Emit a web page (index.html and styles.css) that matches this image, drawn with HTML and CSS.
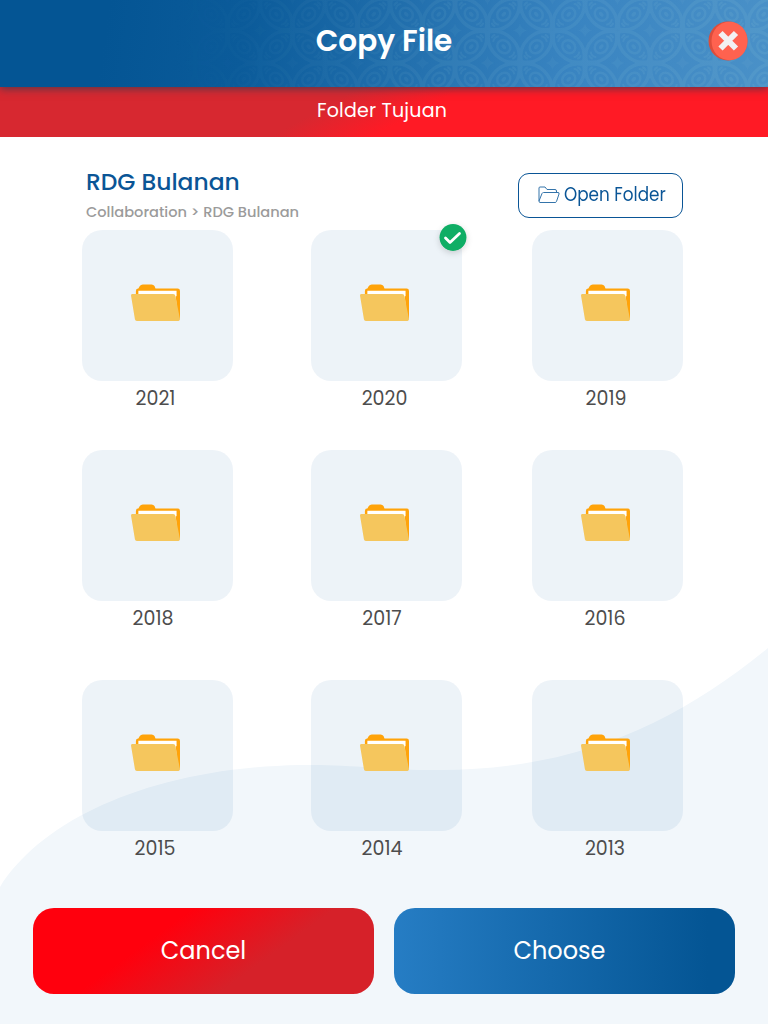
FILE: index.html
```html
<!DOCTYPE html>
<html lang="id">
<head>
<meta charset="utf-8">
<title>Copy File</title>
<link rel="stylesheet" href="styles.css">
</head>
<body>
<svg width="0" height="0" class="defs">
  <symbol id="folder" viewBox="0 0 50 38">
    <path fill="#ffa30a" d="M5 14V7q0-2.500 2.500-2.500L9 2q1-1.700 3-1.700h9q2 0 3 1.700l1 2.500h22.500q2.500 0 2.500 2.500V36l-4-9z"/>
    <path fill="#fff" d="M7.500 6.800h39v20h-39z"/>
    <path fill="#ffa30a" d="M45.500 13l1.200-1 3.300-3v28z"/>
    <path fill="#f5c65d" d="M1.500 10H43q2 0 2.300 2L50 35.700q0 1.800-1.500 1.800H6q-1.700 0-2-1.700L0 11.500Q0 10 1.500 10z"/>
  </symbol>
</svg>
<div class="screen">
  <svg class="wave" viewBox="0 0 768 384" width="768" height="384"><path d="M0 247C42 180 150 128 300 125C350 124 380 130 440 130C580 130 680 80 768 8V384H0z"/></svg>
  <header class="header">
    <svg class="batik" width="768" height="87">
      <defs>
        <g id="eye" fill="none" stroke="#8cc6d8" stroke-width="2">
          <path d="M-21 0C-12-15 12-15 21 0C12 15-12 15-21 0z" stroke-width="3.500"/>
          <path d="M-11-4q-3 4 0 8M-14.500-2.500q-1.500 2.500 0 5M11-4q3 4 0 8M14.500-2.500q1.500 2.500 0 5"/>
          <ellipse rx="7" ry="6" stroke-width="2.500"/><ellipse rx="2.800" ry="1.800" fill="#8cc6d8" stroke="none"/>
        </g>
        <pattern id="tile" width="65" height="65" patternUnits="userSpaceOnUse" x="0" y="-2">
          <use href="#eye" transform="translate(16.250 16.250) rotate(45)"/>
          <use href="#eye" transform="translate(48.750 16.250) rotate(-45)"/>
          <use href="#eye" transform="translate(16.250 48.750) rotate(-45)"/>
          <use href="#eye" transform="translate(48.750 48.750) rotate(45)"/>
          <path fill="#8cc6d8" opacity=".6" d="M32.500-7Q34-1.500 39.500 0Q34 1.500 32.500 7Q31 1.500 25.500 0Q31-1.500 32.500-7zM32.500 58Q34 63.500 39.500 65Q34 66.500 32.500 72Q31 66.500 25.500 65Q31 63.500 32.500 58zM0 25.500Q1.500 31 7 32.500Q1.500 34 0 39.500Q-1.500 34-7 32.500Q-1.500 31 0 25.500zM65 25.500Q66.500 31 72 32.500Q66.500 34 65 39.500Q63.500 34 58 32.500Q63.500 31 65 25.500z"/>
        </pattern>
        <linearGradient id="fade"><stop offset=".22" stop-color="#fff" stop-opacity="0"/><stop offset=".6" stop-color="#fff" stop-opacity=".1"/><stop offset="1" stop-color="#fff" stop-opacity=".13"/></linearGradient>
        <mask id="m"><rect width="768" height="87" fill="url(#fade)"/></mask>
      </defs>
      <rect width="768" height="87" fill="url(#tile)" mask="url(#m)"/>
    </svg>
    <h1 class="title">Copy File</h1>
    <svg class="close" viewBox="0 0 40 40" width="40" height="40"><circle cx="20" cy="20" r="19.500" fill="#dd4d3b"/><ellipse cx="21.500" cy="20" rx="18" ry="19.300" fill="#ff624f"/><path d="M12.500 12l15.500 15.500m0-15.500l-15.500 15.500" stroke="#f2f2f2" stroke-width="6"/></svg>
  </header>
  <div class="subheader"><span class="subtitle">Folder Tujuan</span></div>
  <main class="content">
    <div class="toolbar">
      <div class="where"><h2 class="heading">RDG Bulanan</h2><p class="crumbs">Collaboration &gt; RDG Bulanan</p></div>
      <button class="open"><svg class="open-icon" width="22" height="18" viewBox="0 0 22 18" fill="none" stroke="#3474aa"><path d="M1 15V2q0-1 1-1h5l2 2.500h8q1.500 0 1.500 1.500v2M1 15L4 7.500Q4.500 6.500 5.500 6.500H20q1.500 0 1 1.500l-2.500 7.500q-.4 1-1.500 1H2q-1 0-1-1.500z"/></svg><span class="open-label">Open Folder</span></button>
    </div>
    <div class="grid">
      <div class="item"><div class="tile"><svg class="icon"><use href="#folder"/></svg></div><span class="year y1">2021</span></div>
      <div class="item"><div class="tile"><svg class="icon"><use href="#folder"/></svg><svg class="check" viewBox="0 0 28 28" width="28" height="28"><circle cx="14" cy="14.500" r="13.500" fill="#0fae65"/><path d="M6.500 15l4.500 4.500L20.500 10.500" fill="none" stroke="#fff" stroke-width="2.800" stroke-linecap="round" stroke-linejoin="round"/></svg></div><span class="year y2">2020</span></div>
      <div class="item"><div class="tile"><svg class="icon"><use href="#folder"/></svg></div><span class="year y3">2019</span></div>
      <div class="item"><div class="tile"><svg class="icon"><use href="#folder"/></svg></div><span class="year y4">2018</span></div>
      <div class="item"><div class="tile"><svg class="icon"><use href="#folder"/></svg></div><span class="year y5">2017</span></div>
      <div class="item"><div class="tile"><svg class="icon"><use href="#folder"/></svg></div><span class="year y6">2016</span></div>
      <div class="item"><div class="tile"><svg class="icon"><use href="#folder"/></svg></div><span class="year y7">2015</span></div>
      <div class="item"><div class="tile"><svg class="icon"><use href="#folder"/></svg></div><span class="year y8">2014</span></div>
      <div class="item"><div class="tile"><svg class="icon"><use href="#folder"/></svg></div><span class="year y9">2013</span></div>
    </div>
  </main>
  <footer class="actions"><button class="btn cancel">Cancel</button><button class="btn choose">Choose</button></footer>
</div>
</body>
</html>
```

FILE: styles.css
```css
* { box-sizing: border-box; margin: 0; padding: 0; }
body { font-family: Poppins, Inter, "Open Sans", sans-serif; background: #fff; }
button { font-family: inherit; }
.defs { position: absolute; }
.screen { position: relative; width: 768px; height: 1024px; overflow: hidden; display: flex; flex-direction: column; }
.wave { position: absolute; left: 0; bottom: 0; fill: #f2f7fb; }
.header { position: relative; z-index: 2; height: 87px; flex: none; display: flex; align-items: center; justify-content: center; background: linear-gradient(98deg, #045594 14%, #0b5b9a 32%, #3984c1 74%, #4a91c8); box-shadow: 0 2px 8px rgba(40, 60, 80, .7); }
.batik { position: absolute; inset: 0; }
.title { position: relative; color: #fff; font-size: 29.5px; line-height: 40px; font-weight: 600; padding-bottom: 6px; white-space: nowrap; }
.close { position: absolute; right: 20px; top: 21px; }
.subheader { position: relative; height: 50px; flex: none; display: flex; justify-content: center; align-items: center; padding: 0 4px 4px 0; background: linear-gradient(151deg, #d72830 42%, #ff1a25 54%); color: #fff; font-size: 19px; font-weight: 400; letter-spacing: .2px; }
.content { position: relative; padding: 31px 85px 0 82px; flex: 1; }
.toolbar { display: flex; justify-content: space-between; height: 62px; }
.where { padding-left: 4px; }
.heading { color: #0a5596; font-size: 23.4px; line-height: 28px; font-weight: 500; }
.crumbs { color: #9b9b9b; font-size: 14.6px; line-height: 20px; font-weight: 500; margin-top: 6px; }
.open { width: 165px; height: 45px; margin-top: 5px; border: 1px solid #0a5596; border-radius: 11px; background: #fff; color: #0a5596; font-size: 19px; display: flex; align-items: center; padding: 0 0 2px 19px; gap: 4px; white-space: nowrap; }
.open-label { transform: scaleX(.885); transform-origin: left; }
.grid { display: grid; grid-template-columns: 229px 221px 151px; grid-template-rows: 220px 230px 200px; }
.item { width: 151px; display: flex; flex-direction: column; align-items: center; }
.tile { position: relative; width: 151px; height: 150.5px; border-radius: 20px; background: rgba(0, 80, 155, .071); padding: 54px 0 0 49px; }
.icon { display: block; width: 49px; height: 37.5px; }
.check { position: absolute; right: -5px; top: -7px; filter: drop-shadow(0 2px 3px rgba(0,0,0,.16)); border-radius: 50%; }
.year { color: #4d4d4d; font-size: 19px; line-height: 28px; margin-top: 4px; }
.y1, .y2 { margin-right: 4px; }
.y3 { margin-right: 3px; }
.y4, .y5, .y8 { margin-right: 9px; }
.y6, .y7, .y9 { margin-right: 5px; }
.actions { position: relative; display: flex; gap: 20px; padding: 0 33px 30px; }
.btn { width: 341px; height: 86px; border: 0; border-radius: 21px; color: #fff; font-size: 24px; font-weight: 400; padding-bottom: 1px; }
.cancel { background: linear-gradient(144deg, #ff000d 35%, #d62129 66%); }
.choose { background: linear-gradient(90deg, #267dc4, #045594 92%); padding-right: 10px; }
```
